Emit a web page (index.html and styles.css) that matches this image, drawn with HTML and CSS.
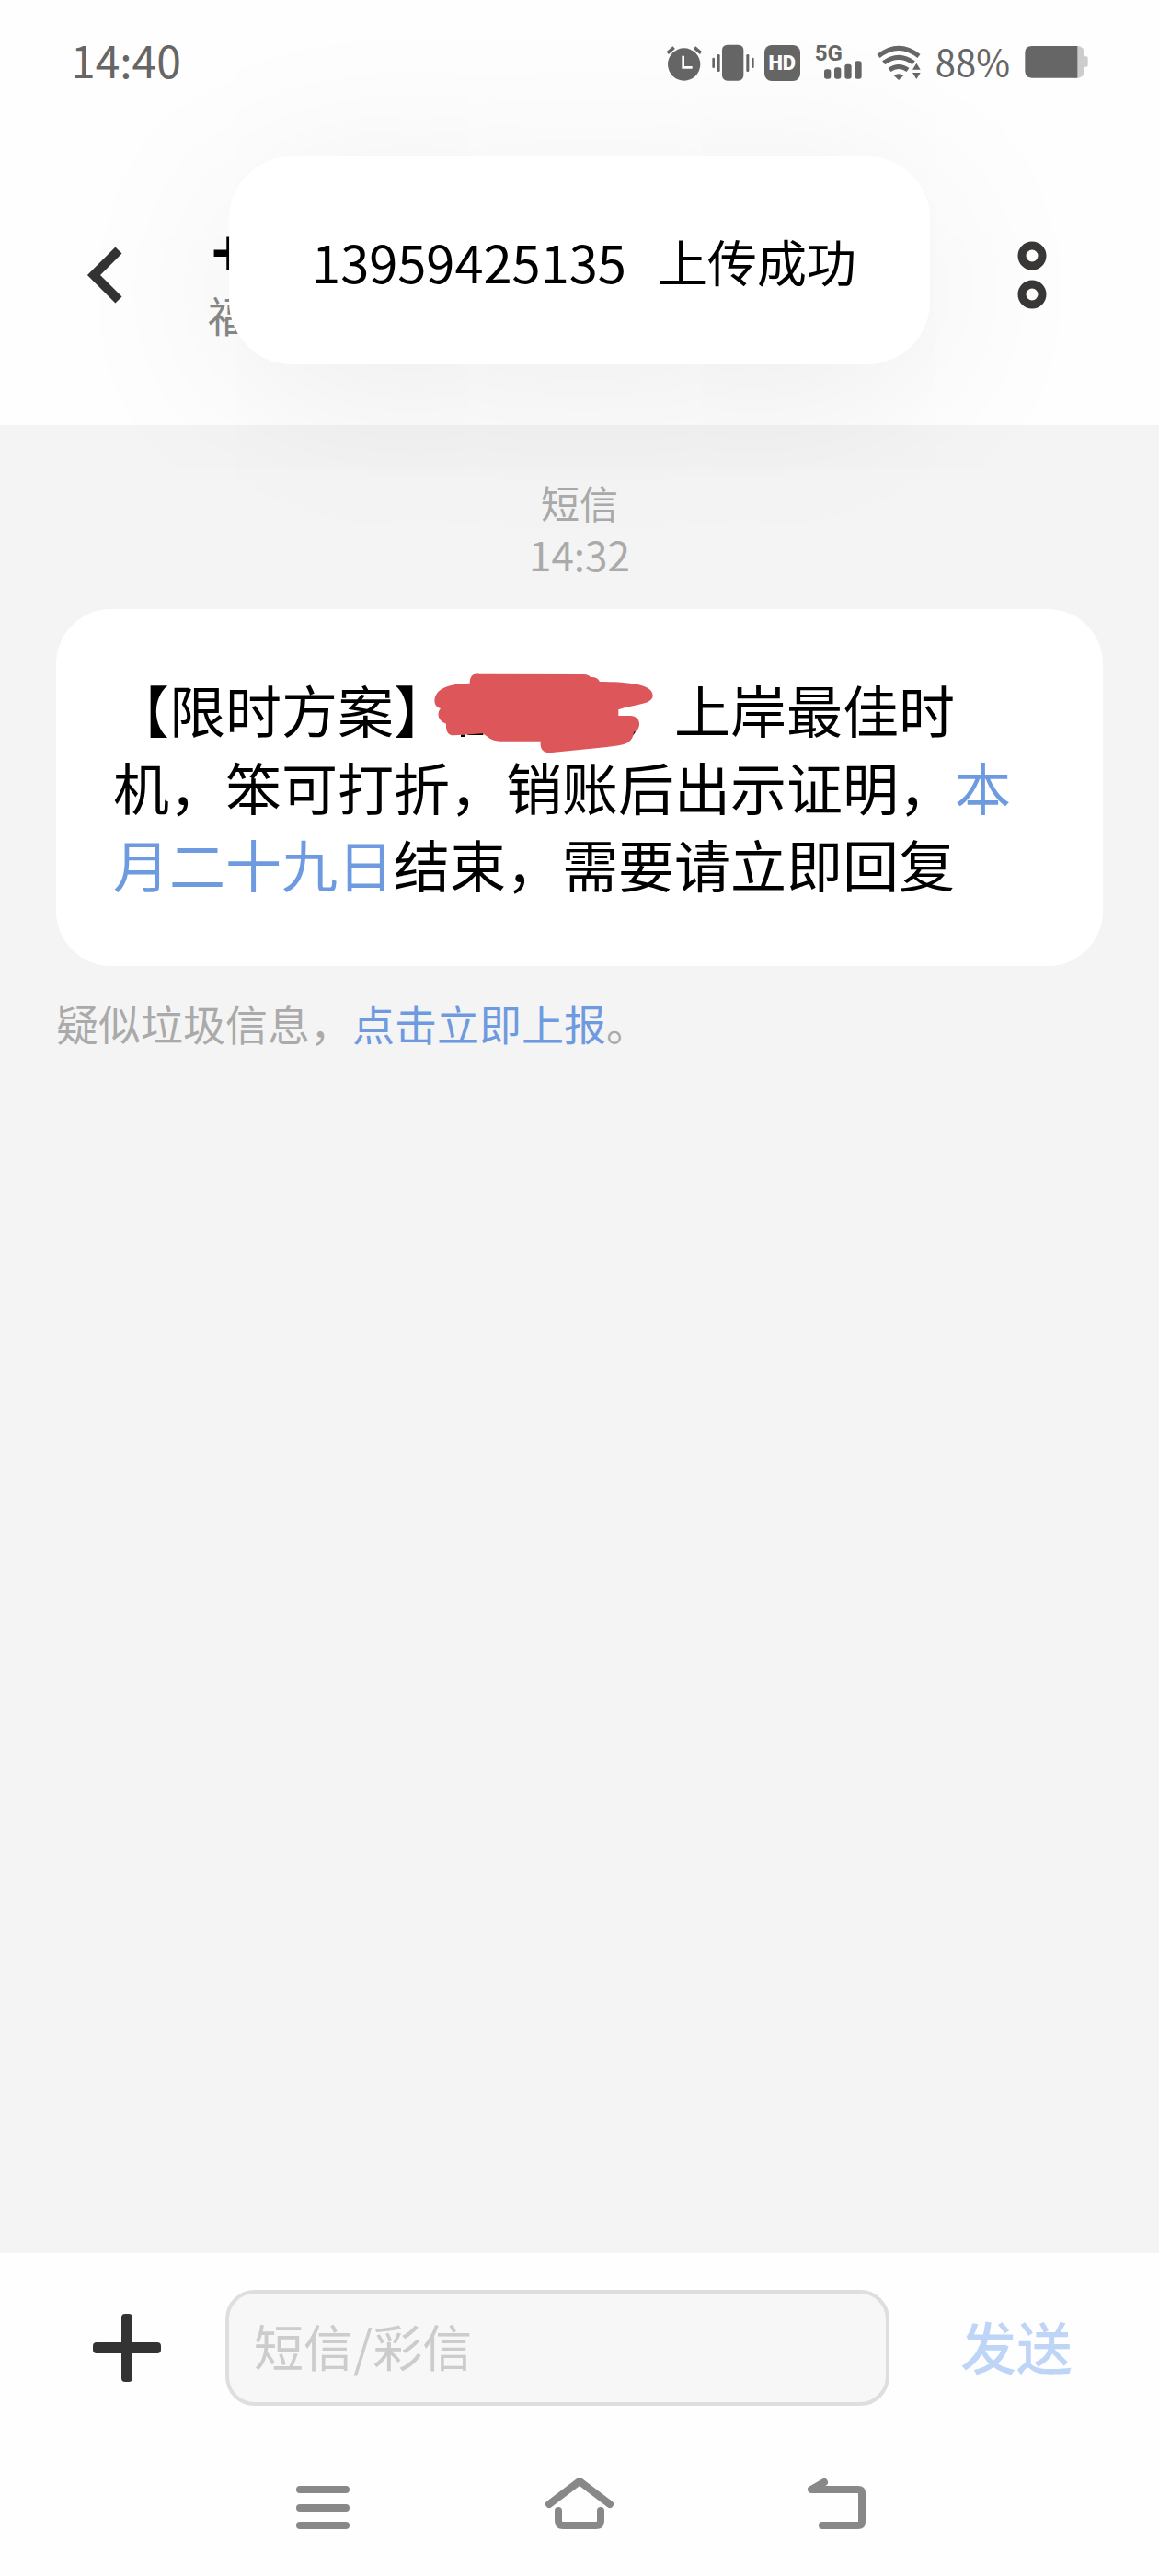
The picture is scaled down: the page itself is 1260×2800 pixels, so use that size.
FILE: index.html
```html
<!DOCTYPE html>
<html lang="zh-CN">
<head>
    <meta charset="UTF-8">
    <meta name="viewport" content="width=device-width, initial-scale=1.0">
    <title>短信</title>
    <link rel="stylesheet" href="styles.css">
</head>
<body>
    <div class="status-bar">
        <span class="clock">14:40</span>
        <div class="status-icons">
            <div class="mode-icons">
                <!-- 闹钟 -->
                <svg width="38" height="40" viewBox="74 49 114 120">
                    <circle cx="130" cy="115" r="53" fill="#666"/>
                    <path d="M76 78L97 60M185 78L164 60" stroke="#666" stroke-width="11"/>
                    <path d="M127 87V125H157" fill="none" stroke="#fff" stroke-width="8"/>
                </svg>
                <!-- 振动 -->
                <svg width="46" height="40" viewBox="225 49 138 120" fill="#666">
                    <rect x="258" y="51" width="70" height="117" rx="17"/>
                    <rect x="242" y="82" width="9" height="57" rx="4"/>
                    <rect x="226" y="93" width="8" height="34" rx="4"/>
                    <rect x="337" y="82" width="9" height="57" rx="4"/>
                    <rect x="354" y="93" width="8" height="34" rx="4"/>
                </svg>
                <span class="hd">HD</span>
            </div>
            <div class="signal">
                <span class="net">5G</span>
                <svg width="41" height="20" viewBox="594 104 123 60" fill="#666">
                    <rect x="594" y="132" width="22" height="31" rx="8"/>
                    <rect x="627" y="126" width="22" height="37" rx="8"/>
                    <rect x="661" y="115" width="22" height="48" rx="8"/>
                    <rect x="694" y="105" width="22" height="58" rx="8"/>
                </svg>
            </div>
            <!-- WiFi -->
            <svg width="48" height="40" viewBox="766 51 144 120">
                <g fill="none" stroke="#666" stroke-width="15">
                    <path d="M772 90Q838 38 904 90"/>
                    <path d="M789 112Q838 76 887 112"/>
                    <path d="M808 135Q838 114 868 135"/>
                </g>
                <path d="M822 153Q838 143 854 153L838 168Z" fill="#666"/>
                <path d="M883 134L896 113L909 134ZM883 144L896 165L909 144Z" fill="#666"/>
            </svg>
            <span class="percent">88%</span>
            <svg width="69" height="40" viewBox="1243 57 207 120">
                <rect x="1380" y="63" width="58" height="104" rx="22" fill="#ccc"/>
                <rect x="1432" y="97" width="17" height="34" rx="5" fill="#ccc"/>
                <path d="M1266 63H1415V167H1266Q1244 167 1244 145V85Q1244 63 1266 63Z" fill="#666"/>
            </svg>
        </div>
    </div>

    <header class="top-bar">
        <button class="icon-btn" aria-label="返回">
            <svg width="40" height="64" viewBox="0 0 40 64">
                <path d="M35 5L8 32L35 59" fill="none" stroke="#333" stroke-width="10"/>
            </svg>
        </button>
        <div class="contact">
            <div class="contact-number">+</div>
            <div class="contact-place">福</div>
        </div>
        <button class="icon-btn" aria-label="更多">
            <svg width="32" height="76" viewBox="0 0 32 76" fill="none" stroke="#393836" stroke-width="9">
                <circle cx="16" cy="17" r="11"/>
                <circle cx="16" cy="59" r="11"/>
            </svg>
        </button>
    </header>

    <main class="messages">
        <div class="msg-time">短信<br><span>14:32</span></div>
        <div class="bubble">【限时方案】<span class="covered"><svg width="300" height="120" viewBox="0 0 900 360">
                    <path d="M183 269H195M205 263H256" stroke="#000" stroke-width="8"/>
                    <path d="M212 98C212 74 222 65 244 68L585 69Q600 70 606 78Q628 76 636 93C720 94 809 98 809 138C809 168 750 166 697 184V204H735C775 204 771 251 747 257C742 300 710 298 660 306L480 324C448 327 441 310 443 287H310C280 287 272 272 254 262L160 268C138 268 134 250 135 230C110 222 102 198 117 180C88 174 92 132 122 116C145 102 180 99 212 98Z" fill="#dc565a"/>
                </svg></span>，上岸最佳时<br>机，笨可打折，销账后出示证明，<a href="#">本<br>月二十九日</a>结束，需要请立即回复</div>
        <p class="spam-tips">疑似垃圾信息，<a href="#">点击立即上报</a>。</p>
    </main>

    <form class="composer">
        <button type="button" class="icon-btn" aria-label="添加">
            <svg width="74" height="74" viewBox="0 0 74 74" fill="#333">
                <rect x="31" y="0" width="12" height="74" rx="4"/>
                <rect x="0" y="31" width="74" height="12" rx="4"/>
            </svg>
        </button>
        <input type="text" class="msg-input" aria-label="短信/彩信" placeholder="短信/彩信">
        <button type="button" class="send-btn">发送</button>
    </form>

    <nav class="nav-bar">
        <button class="icon-btn" aria-label="最近任务">
            <svg width="74" height="60" viewBox="0 0 74 60" fill="none" stroke="#888" stroke-width="8" stroke-linecap="round">
                <path d="M12 16H62M12 36H62M12 55H62"/>
            </svg>
        </button>
        <button class="icon-btn" aria-label="主屏幕">
            <svg width="74" height="60" viewBox="0 0 74 60" fill="none" stroke="#888" stroke-width="8" stroke-linecap="round" stroke-linejoin="round">
                <path d="M4 32L37 7L70 32"/>
                <path d="M14 39V50Q14 55 19 55H55Q60 55 60 50V39"/>
            </svg>
        </button>
        <button class="icon-btn" aria-label="返回上一页">
            <svg width="74" height="60" viewBox="0 0 74 60" fill="none" stroke="#888" stroke-width="8" stroke-linecap="round" stroke-linejoin="round">
                <path d="M24 8L10 16H61Q65 16 65 20V51Q65 55 61 55H22"/>
            </svg>
        </button>
    </nav>

    <div class="toast" role="status">
        <span class="toast-number">13959425135</span>
        <span>上传成功</span>
    </div>
</body>
</html>
```
FILE: styles.css
```css
* {
    box-sizing: border-box;
}

body {
    font-family: 'Noto Sans CJK SC', sans-serif;
    margin: 0;
    min-height: 100vh;
    display: flex;
    flex-direction: column;
    background: #fefefe;
    color: #000;
}

a {
    color: #6e9ae0;
    text-decoration: none;
}

button {
    font-family: inherit;
    background: none;
    border: none;
    padding: 0;
    cursor: pointer;
}

svg {
    display: block;
    overflow: visible;
}

.icon-btn {
    flex: none;
}

/* 状态栏 */
.status-bar {
    height: 136px;
    padding: 0 77px;
    display: flex;
    justify-content: space-between;
    align-items: center;
    color: #666;
}

.clock {
    padding-bottom: 8px;
    font-size: 48px;
}

.status-icons {
    display: flex;
    align-items: center;
    gap: 16px;
}

.mode-icons {
    display: flex;
    align-items: center;
    gap: 11px;
}

.hd {
    width: 39px;
    height: 39px;
    border-radius: 8px;
    background: #666;
    color: #fff;
    font: 900 22px/39px Roboto, sans-serif;
    text-align: center;
}

.signal {
    width: 51px;
    display: flex;
    flex-direction: column;
}

.signal svg {
    align-self: flex-end;
}

.net {
    height: 16px;
    font: bold 24px/16px Roboto, sans-serif;
}

.percent {
    padding-bottom: 4px;
    font-size: 40px;
}

/* 顶部联系人 */
.top-bar {
    height: 326px;
    padding: 0 122px 0 94px;
    display: flex;
    align-items: center;
}

.contact {
    flex: 1;
    padding: 24px 0 0 92px;
}

.contact-number {
    font: 600 72px/60px Inter, sans-serif;
}

.contact-place {
    font-size: 46px;
    line-height: 82px;
    color: #888;
}

/* 消息列表 */
.messages {
    flex: 1;
    padding: 56px 61px;
    background: #f4f4f4;
}

.msg-time {
    font-size: 42px;
    line-height: 56px;
    text-align: center;
    color: #aaa;
}

.msg-time span {
    font-size: 44px;
}

.bubble {
    margin-top: 31px;
    padding: 67px 62px 69px;
    border-radius: 60px;
    background: #fff;
    font-size: 61px;
    line-height: 84px;
}

.covered {
    display: inline-block;
    width: 3em;
    height: 1em;
    position: relative;
}

/* 涂抹遮住的文字 */
.covered svg {
    position: absolute;
    left: -49px;
    top: -26px;
    z-index: 1;
}

.spam-tips {
    margin: 27px 0 0;
    font-size: 46px;
    line-height: 69px;
    color: #aaa;
}

/* 输入区 */
.composer {
    height: 205px;
    padding: 0 94px 0 101px;
    display: flex;
    align-items: center;
}

.msg-input {
    flex: 1;
    min-width: 0;
    height: 126px;
    margin: 0 77px 0 70px;
    padding: 0 27px 4px;
    border: 4px solid #dedede;
    border-radius: 32px;
    background: #f7f7f7;
    font-family: inherit;
    font-size: 54px;
}

.msg-input::placeholder {
    color: #ccc;
}

.send-btn {
    padding-bottom: 4px;
    font-size: 61px;
    font-weight: 500;
    color: #bfd5f7;
}

.nav-bar {
    height: 146px;
    padding: 36px 314px 0;
    display: flex;
    justify-content: space-between;
    align-items: flex-start;
}

/* 上传提示 */
.toast {
    position: absolute;
    top: 170px;
    left: 50%;
    transform: translateX(-50%);
    height: 226px;
    padding: 0 80px 0 90px;
    border-radius: 68px;
    background: #fff;
    box-shadow: 0 32px 200px rgba(0, 0, 0, 0.08);
    display: flex;
    align-items: center;
    gap: 34px;
    font-size: 54px;
    white-space: nowrap;
}

.toast-number {
    font-size: 56px;
}
```
